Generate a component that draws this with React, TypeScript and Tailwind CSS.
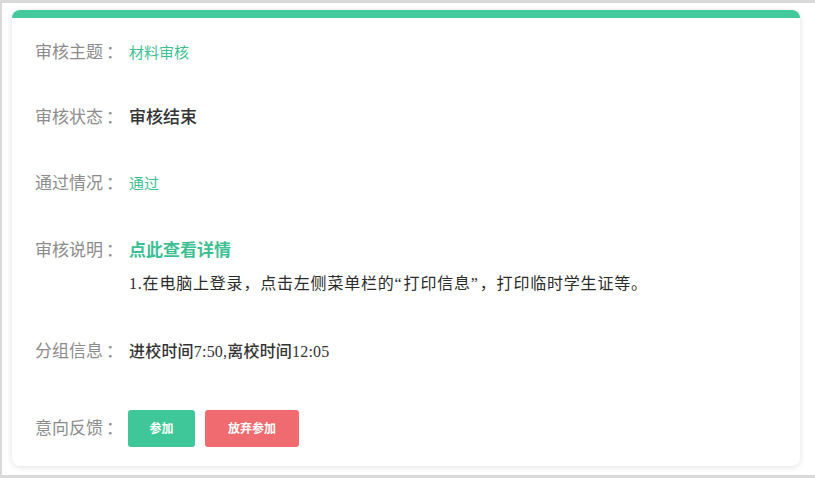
import React from "react";

const font = { fontFamily: '"Liberation Serif", "Noto Sans CJK SC", serif' };

function Label({ text }: { text: string }) {
  return (
    <div className="w-[94px] shrink-0 flex text-[17px] leading-[24px] text-[#8c8c8c]">
      <span>{text}</span>
      <span className="ml-[3px]">：</span>
    </div>
  );
}

export default function App() {
  return (
    <div
      className="w-[815px] h-[478px] bg-white border-t-[3px] border-b-[3px] border-l-[2px] border-[#d9d9d9] overflow-hidden"
      style={font}
    >
      <div className="ml-[10px] mt-[7px] w-[788px] h-[456px] rounded-[8px] bg-white shadow-[0_1px_6px_rgba(0,0,0,0.12)] flex flex-col overflow-hidden">
        <div className="h-[8px] bg-[#44c99c] shrink-0" />
        <div className="pl-[23px] pt-[23px] flex flex-col">
          <div className="flex items-center h-[24px]">
            <Label text="审核主题" />
            <div className="text-[15px] text-[#3dbf94]">材料审核</div>
          </div>
          <div className="flex items-center h-[24px] mt-[41px]">
            <Label text="审核状态" />
            <div className="text-[17px] font-medium text-[#333]">审核结束</div>
          </div>
          <div className="flex items-center h-[24px] mt-[42px]">
            <Label text="通过情况" />
            <div className="text-[15px] text-[#3dbf94]">通过</div>
          </div>
          <div className="flex items-center h-[24px] mt-[43px]">
            <Label text="审核说明" />
            <div className="text-[17px] font-bold text-[#3dbf94]">点此查看详情</div>
          </div>
          <div className="pl-[94px] mt-[9px] h-[24px] leading-[24px] text-[16px] tracking-[0.8px] text-[#2b2b2b]">
            1.在电脑上登录，点击左侧菜单栏的
            <span className="inline-block w-[9px] text-left">“</span>
            打印信息
            <span className="inline-block w-[9px] text-left">”</span>
            ，打印临时学生证等。
          </div>
          <div className="flex items-center h-[24px] mt-[44px]">
            <Label text="分组信息" />
            <div className="text-[16px] font-medium tracking-[0.2px] text-[#333]">进校时间7:50,离校时间12:05</div>
          </div>
          <div className="flex items-center h-[37px] mt-[46px]">
            <Label text="意向反馈" />
            <div className="flex gap-[10px] -ml-[1px]">
              <button className="w-[67px] h-[37px] rounded-[3px] bg-[#3fc799] text-white text-[12px] font-bold">参加</button>
              <button className="w-[94px] h-[37px] rounded-[3px] bg-[#ef6b6f] text-white text-[12px] font-bold">放弃参加</button>
            </div>
          </div>
        </div>
      </div>
    </div>
  );
}
